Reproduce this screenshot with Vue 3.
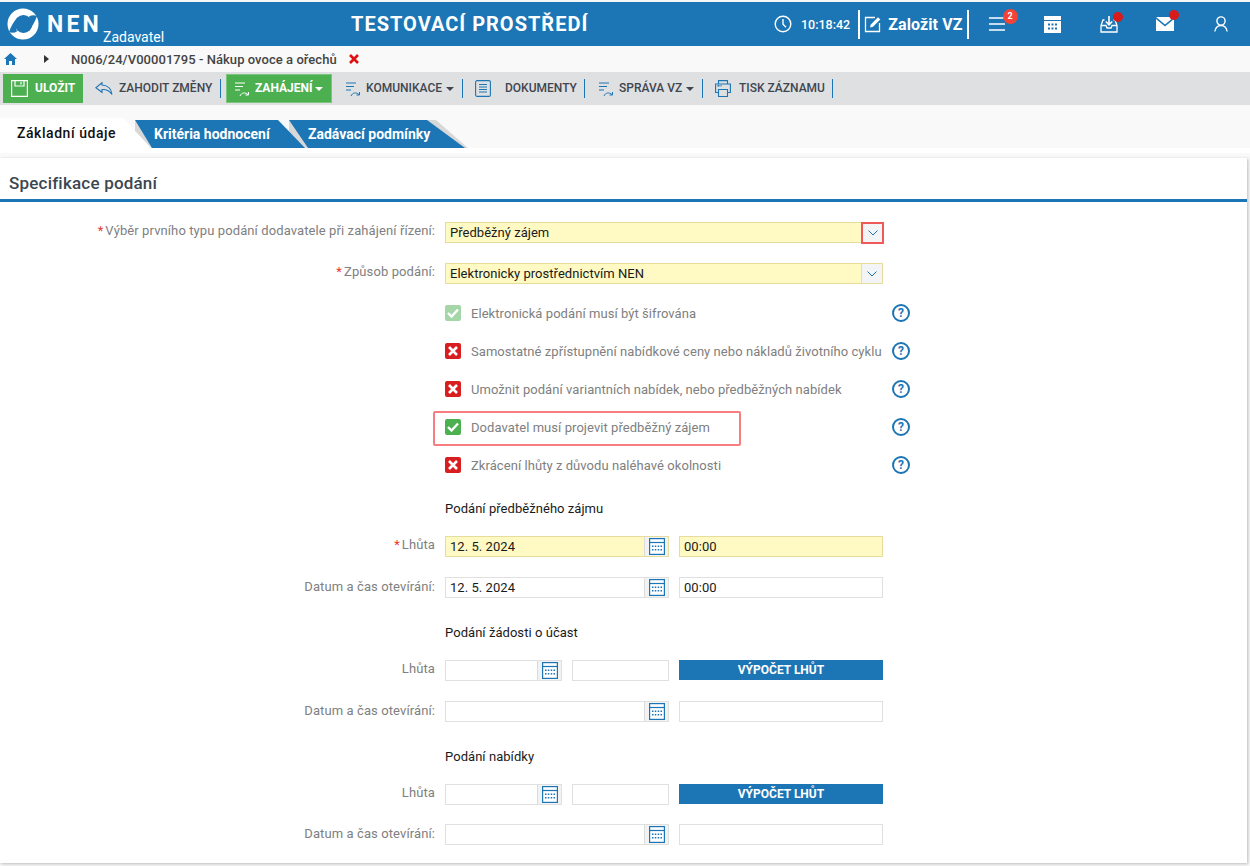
<script setup>
const checks = [
  { text: 'Elektronická podání musí být šifrována', state: 'muted' },
  { text: 'Samostatné zpřístupnění nabídkové ceny nebo nákladů životního cyklu', state: 'off' },
  { text: 'Umožnit podání variantních nabídek, nebo předběžných nabídek', state: 'off' },
  { text: 'Dodavatel musí projevit předběžný zájem', state: 'on', marked: true },
  { text: 'Zkrácení lhůty z důvodu naléhavé okolnosti', state: 'off' }
]
const sections = [
  { title: 'Podání předběžného zájmu', cls: 'sec1', rows: [
    { label: 'Lhůta', req: true, date: '12. 5. 2024', time: '00:00', yellow: true },
    { label: 'Datum a čas otevírání:', date: '12. 5. 2024', time: '00:00' }
  ] },
  { title: 'Podání žádosti o účast', cls: 'sec2', rows: [
    { label: 'Lhůta', date: '', time: '', calc: true },
    { label: 'Datum a čas otevírání:', date: '', time: '' }
  ] },
  { title: 'Podání nabídky', cls: 'sec3', rows: [
    { label: 'Lhůta', date: '', time: '', calc: true },
    { label: 'Datum a čas otevírání:', date: '', time: '' }
  ] }
]
</script>

<template>
  <div class="page">
    <header class="top">
      <div class="brand">
        <svg class="logo" width="32" height="32" viewBox="0 0 32 32">
          <circle cx="16" cy="16" r="15.500" fill="#fff"/>
          <circle cx="16.500" cy="16" r="9" fill="#1c75b4"/>
          <path d="M2 24 C4 18 7 13 11 9 C8.500 14 8 19 10 23.500 C7.500 25 4.500 25 2 24z" fill="#1c75b4"/>
          <path d="M30 8 C28 14 25 19 21 23 C23.500 18 24 13 22 8.500 C24.500 7 27.500 7 30 8z" fill="#1c75b4"/>
        </svg>
        <span class="nen">NEN</span>
        <span class="role">Zadavatel</span>
      </div>
      <div class="title">TESTOVACÍ PROSTŘEDÍ</div>
      <div class="tools">
        <svg class="clock" width="18" height="18" viewBox="0 0 18 18" fill="none" stroke="#fff" stroke-width="1.400">
          <circle cx="9" cy="9" r="7.800"/><path d="M9 4v5.200l3 3"/>
        </svg>
        <span class="time">10:18:42</span>
        <i class="vbar first"></i>
        <svg class="edit" width="18" height="18" viewBox="0 0 18 18" fill="none" stroke="#fff" stroke-width="1.300">
          <path d="M11 2.500H1.500v14h14V8"/>
          <path d="M6 12.500l.8-3L14 2.300l2.300 2.200L9 11.700z" fill="#fff" stroke="none"/>
        </svg>
        <span class="create">Založit VZ</span>
        <i class="vbar"></i>
        <div class="menu-ico">
          <svg width="17" height="16" viewBox="0 0 17 16" stroke="#fff" stroke-width="1.500"><path d="M0 2h16M0 8h16M0 14h16"/></svg>
          <b class="badge">2</b>
        </div>
        <svg class="cal-top" width="17" height="17" viewBox="0 0 17 17">
          <path d="M0 0h17v17H0z" fill="#fff"/>
          <path d="M0 4.500h17" stroke="#1c75b4"/>
          <path d="M4 7.500h2v2H4zM7.500 7.500h2v2h-2zM11 7.500h2v2h-2zM4 11.500h2v2H4zM7.500 11.500h2v2h-2zM11 11.500h2v2h-2z" fill="#1c75b4"/>
        </svg>
        <div class="inbox">
          <svg width="18" height="18" viewBox="0 0 18 18" fill="none" stroke="#fff" stroke-width="1.300">
            <path d="M4.500 5H3L1 10.500V17h16v-6.500L15 5h-1.500"/>
            <path d="M1 10.500h5l1 2.500h4l1-2.500h5"/>
            <path d="M9 1v8M5.800 6.500L9 9.800l3.200-3.300" stroke-width="1.600"/>
          </svg>
          <i class="dot"></i>
        </div>
        <div class="mail">
          <svg width="18" height="14" viewBox="0 0 18 14">
            <path d="M0 0h18L9 7.500z" fill="#fff"/>
            <path d="M0 2l9 7.500L18 2v12H0z" fill="#fff"/>
          </svg>
          <i class="dot"></i>
        </div>
        <svg class="user" width="14" height="16" viewBox="0 0 14 16" fill="none" stroke="#fff" stroke-width="1.400">
          <circle cx="7" cy="5" r="4.100"/><path d="M.8 15.500C1.500 11.500 4 9.500 7 9.500s5.500 2 6.200 6"/>
        </svg>
      </div>
    </header>

    <nav class="crumbs">
      <svg class="home" width="13" height="12" viewBox="0 0 13 12"><path d="M6.500 0L13 6h-2v6H8V8H5v4H2V6H0z" fill="#1c75b4"/></svg>
      <i class="crumb-arrow"></i>
      <span class="crumb-text">N006/24/V00001795 - Nákup ovoce a ořechů</span>
      <svg class="crumb-x" width="10" height="10" viewBox="0 0 10 10"><path d="M1 1l8 8M9 1L1 9" stroke="#e01010" stroke-width="2.600"/></svg>
    </nav>

    <div class="toolbar">
      <button class="green save">
        <svg width="17" height="17" viewBox="0 0 17 17" fill="none" stroke="#fff" stroke-width="1.200"><path d="M.6.600h15.800v15.800H.6zM4 .6v5.400h9V.6M10 2v2.500"/></svg>
        <span>ULOŽIT</span>
      </button>
      <div class="tool discard">
        <svg width="18" height="13" viewBox="0 0 18 13" fill="none" stroke="#1c75b4" stroke-width="1.100"><path d="M7 .7L.8 5.700 7 10.300V7.500c4-.3 7.500 1 10 5-.5-5-4-9-10-9.500z"/></svg>
        <span>ZAHODIT ZMĚNY</span>
      </div>
      <i class="tbar b1"></i>
      <button class="green start">
        <svg class="flow" width="15" height="15" viewBox="0 0 15 15" fill="none" stroke="#fff" stroke-width="1"><path d="M0 1h10M0 4.500h8M0 8h5M5 14c1.500-3.500 5-4 8-1.500M13.500 10v3h-3"/></svg>
        <span>ZAHÁJENÍ</span><i class="caret white"></i>
      </button>
      <div class="tool comm">
        <svg class="flow" width="15" height="15" viewBox="0 0 15 15" fill="none" stroke="#1c75b4" stroke-width="1"><path d="M0 1h10M0 4.500h8M0 8h5M5 14c1.500-3.500 5-4 8-1.500M13.500 10v3h-3"/></svg>
        <span>KOMUNIKACE</span><i class="caret"></i>
      </div>
      <i class="tbar b2"></i>
      <div class="tool docs">
        <svg width="16" height="17" viewBox="0 0 16 17" fill="none" stroke="#1c75b4" stroke-width="1.100"><rect x=".6" y=".6" width="14.800" height="15.800" rx="1.500"/><path d="M4 4.500h8M4 7h8M4 9.500h8M4 12h8"/></svg>
        <span>DOKUMENTY</span>
      </div>
      <i class="tbar b3"></i>
      <div class="tool manage">
        <svg class="flow" width="15" height="15" viewBox="0 0 15 15" fill="none" stroke="#1c75b4" stroke-width="1"><path d="M0 1h10M0 4.500h8M0 8h5M5 14c1.500-3.500 5-4 8-1.500M13.500 10v3h-3"/></svg>
        <span>SPRÁVA VZ</span><i class="caret"></i>
      </div>
      <i class="tbar b4"></i>
      <div class="tool print">
        <svg width="16" height="17" viewBox="0 0 16 17" fill="none" stroke="#1c75b4" stroke-width="1.100"><path d="M3.500 4V.6h9V4M3.500 12.500H.6V4h14.800v8.500h-2.900M3.500 9.500h9v7h-9z"/><path d="M2.500 5.700h2M5.500 5.700h1" stroke-width="1.400"/></svg>
        <span>TISK ZÁZNAMU</span>
      </div>
      <i class="tbar b5"></i>
    </div>

    <div class="tabs">
      <div class="tab-active">Základní údaje</div>
      <div class="tab t2"><span>Kritéria hodnocení</span></div>
      <div class="tab t3"><span>Zadávací podmínky</span></div>
    </div>
    <div class="tab-strip"></div>

    <main class="panel">
      <h2 class="panel-title">Specifikace podání</h2>
      <div class="form">
        <div class="row">
          <label class="lab"><em>*</em>Výběr prvního typu podání dodavatele při zahájení řízení:</label>
          <div class="select">
            <span>Předběžný zájem</span>
            <div class="arrow marked"><svg width="10" height="6" viewBox="0 0 10 6" fill="none" stroke="#1c75b4"><path d="M.5.500L5 5l4.500-4.500"/></svg></div>
          </div>
        </div>
        <div class="row last-select">
          <label class="lab"><em>*</em>Způsob podání:</label>
          <div class="select">
            <span>Elektronicky prostřednictvím NEN</span>
            <div class="arrow"><svg width="10" height="6" viewBox="0 0 10 6" fill="none" stroke="#1c75b4"><path d="M.5.500L5 5l4.500-4.500"/></svg></div>
          </div>
        </div>

        <div v-for="c in checks" :key="c.text" class="check-row">
          <div class="check-wrap" :class="{ flagged: c.marked }">
            <span class="box" :class="c.state">
              <svg v-if="c.state !== 'off'" width="12" height="10" viewBox="0 0 12 10" fill="none" stroke="#fff" stroke-width="2.400"><path d="M1 5l3.500 3.500L11 1.500"/></svg>
              <svg v-else width="10" height="10" viewBox="0 0 10 10" fill="none" stroke="#fff" stroke-width="2.600"><path d="M1 1l8 8M9 1L1 9"/></svg>
            </span>
            <span class="check-text">{{ c.text }}</span>
          </div>
          <span class="help">?</span>
        </div>

        <section v-for="s in sections" :key="s.title" class="section" :class="s.cls">
          <h3 class="sec-title">{{ s.title }}</h3>
          <div v-for="r in s.rows" :key="r.label" class="row">
            <label class="lab"><em v-if="r.req">*</em>{{ r.label }}</label>
            <div class="fields" :class="{ short: r.calc }">
              <div class="date" :class="{ yellow: r.yellow }">
                <span>{{ r.date }}</span>
                <div class="cal">
                  <svg width="16" height="17" viewBox="0 0 16 17" fill="none">
                    <rect x=".6" y=".6" width="14.800" height="15.800" fill="#fff" stroke="#1c75b4" stroke-width="1.200"/>
                    <path d="M.6 4.500h14.800" stroke="#1c75b4" stroke-width="1.200"/>
                    <path d="M3 7.500h1.500V9H3zM5.800 7.500h1.500V9H5.800zM8.700 7.500h1.500V9H8.700zM11.500 7.500H13V9h-1.500zM3 11h1.500v1.500H3zM5.800 11h1.500v1.500H5.800zM8.700 11h1.500v1.500H8.700zM11.500 11H13v1.500h-1.500z" fill="#1c75b4"/>
                  </svg>
                </div>
              </div>
              <div class="timebox" :class="{ yellow: r.yellow }">{{ r.time }}</div>
              <button v-if="r.calc" class="calc">VÝPOČET LHŮT</button>
            </div>
          </div>
        </section>
      </div>
    </main>
  </div>
</template>

<style>
html, body { margin: 0; background: #e6e6e6; }
</style>

<style scoped>
.page { width: 1250px; height: 866px; overflow: hidden; background: #f9f9f9; font-family: Roboto, "Liberation Sans", sans-serif; }

.top { margin-top: 2px; height: 44px; background: #1c75b4; color: #fff; display: flex; align-items: center; box-shadow: 0 -2px 0 #f4f6f7; }
.brand { width: 351px; height: 44px; display: flex; align-items: flex-start; flex: none; box-sizing: border-box; padding-left: 7px; }
.logo { margin-top: 6px; flex: none; }
.nen { font-weight: 700; font-size: 23px; letter-spacing: 3.200px; line-height: 27px; margin: 9px 0 0 8px; }
.role { font-size: 14px; line-height: 16px; margin: 27px 0 0 1px; }
.title { font-size: 20px; font-weight: 700; letter-spacing: 1px; width: 423px; flex: none; white-space: nowrap; }
.tools { display: flex; align-items: center; height: 44px; flex: 1; position: relative; }
.clock { flex: none; }
.time { font-size: 12.500px; font-weight: 500; margin-left: 9px; }
.vbar { width: 2px; height: 29px; background: #fff; flex: none; margin: 0 0 0 4px; }
.vbar.first { margin-left: 8px; }
.edit { margin-left: 4px; flex: none; }
.create { font-size: 16px; font-weight: 700; margin-left: 6px; letter-spacing: .1px; white-space: nowrap; }
.menu-ico { position: relative; margin-left: 20px; height: 16px; flex: none; }
.menu-ico svg { display: block; }
.badge { position: absolute; left: 14px; top: -7px; width: 15px; height: 15px; border-radius: 50%; background: #f44336; font-size: 9px; line-height: 15px; text-align: center; }
.cal-top { margin-left: 38px; flex: none; }
.inbox, .mail { position: relative; flex: none; }
.inbox { margin-left: 39px; height: 18px; }
.mail { margin-left: 38px; height: 14px; }
.inbox svg, .mail svg { display: block; }
.dot { position: absolute; width: 10px; height: 10px; border-radius: 50%; background: #d81b1b; }
.inbox .dot { left: 13px; top: -3px; }
.mail .dot { left: 13px; top: -7px; }
.user { margin-left: 40px; flex: none; }

.crumbs { height: 26px; display: flex; align-items: center; background: #f9f9f9; }
.home { margin-left: 4px; flex: none; }
.crumb-arrow { width: 0; height: 0; border-left: 5px solid #333; border-top: 4px solid transparent; border-bottom: 4px solid transparent; margin-left: 27px; }
.crumb-text { margin-left: 22px; font-size: 13px; font-weight: 500; color: #444; letter-spacing: .05px; white-space: nowrap; }
.crumb-x { margin-left: 12px; flex: none; }

.toolbar { height: 33px; background: #dfe0e2; display: flex; align-items: center; font-size: 12px; font-weight: 500; color: #3f4650; white-space: nowrap; }
.toolbar span { position: relative; top: -1px; }
.green { border: 0; padding: 0; height: 29px; background: #4caf50; color: #fff; font: 700 12px Roboto, sans-serif; display: flex; align-items: center; flex: none; }
.save { margin-left: 3px; width: 80px; padding-left: 8px; gap: 7px; }
.save svg, .start svg, .tool svg { flex: none; }
.flow { position: relative; top: 1px; }
.tool { display: flex; align-items: center; flex: none; }
.discard { margin-left: 12px; width: 125px; gap: 7px; }
.discard span { left: -1px; }
.tbar { width: 1px; height: 19px; background: #1c75b4; flex: none; }
.start { margin-left: 5px; width: 106px; padding-left: 8px; gap: 5px; border: 1px solid #7cc57f; box-sizing: border-box; }
.caret { width: 0; height: 0; border-top: 4px solid #3f4650; border-left: 4px solid transparent; border-right: 4px solid transparent; flex: none; }
.caret.white { border-top-color: #fff; }
.start .caret { margin-left: -3px; }
.comm { margin-left: 14px; width: 116px; gap: 5px; }
.comm .caret, .manage .caret { margin-left: -1px; }
.docs { margin-left: 12px; width: 109px; gap: 14px; }
.manage { margin-left: 14px; width: 103px; gap: 5px; }
.print { margin-left: 12px; width: 117px; gap: 8px; }

.tabs { margin-top: 13px; height: 30px; display: flex; align-items: flex-end; position: relative; }
.tab-active { width: 151px; height: 30px; box-sizing: border-box; background: #fff; clip-path: polygon(0 0, 123px 0, 100% 100%, 0 100%); font-size: 14px; font-weight: 500; letter-spacing: .55px; color: #111; padding: 7px 0 0 17px; position: relative; z-index: 4; flex: none; }
.tab { height: 28px; position: relative; flex: none; color: #fff; font-size: 14px; font-weight: 700; }
.tab::before { content: ""; position: absolute; inset: 0 -3px 0 0; background: #d8d8d8; clip-path: polygon(0 0, calc(100% - 32px) 0, 100% 100%, 0 100%); }
.tab span { position: absolute; inset: 0; background: #1c75b4; line-height: 29px; }
.t2 { width: 170px; margin-left: -16px; z-index: 3; }
.t2 span { clip-path: polygon(0 0, 143px 0, 100% 100%, 17px 100%); padding-left: 19px; }
.t3 { width: 176px; margin-left: -16px; z-index: 2; }
.t3 span { clip-path: polygon(0 0, 138px 0, 100% 100%, 19px 100%); padding-left: 19px; }
.tab-strip { height: 5px; background: #fff; }

.panel { margin: 5px 3px 0 0; height: 705px; background: #fff; box-shadow: 1px 1px 3px rgba(0,0,0,.25); overflow: hidden; }
.panel-title { margin: 0; box-sizing: border-box; padding: 13px 0 0 9px; border-bottom: 3px solid #1c75b4; height: 44px; font-size: 17px; line-height: 24px; font-weight: 500; color: #3c4650; letter-spacing: .2px; }
.form { padding-top: 20px; }
.row { display: flex; height: 21px; margin-bottom: 20px; }
.last-select { margin-bottom: 10px; }
.lab { width: 435px; flex: none; text-align: right; font-size: 13px; line-height: 18px; color: #808080; white-space: nowrap; letter-spacing: .1px; }
.section .row:last-child .lab { padding-top: 1px; }
.lab em { color: #e53935; font-style: normal; margin-right: 2px; }
.select { width: 438px; height: 21px; box-sizing: border-box; margin-left: 10px; background: #fff9c4; border: 1px solid #e6dc9c; display: flex; align-items: center; justify-content: space-between; padding-left: 4px; font-size: 13px; color: #1a1a1a; letter-spacing: .03px; position: relative; }
.arrow { width: 20px; height: 19px; background: #f2f4f6; border-left: 1px solid #dcdcdc; display: flex; align-items: center; justify-content: center; }
.arrow.marked { position: absolute; right: -2px; top: -1px; width: 23px; height: 22px; box-sizing: border-box; border: 2px solid #f0595a; }

.check-row { height: 38px; display: flex; align-items: center; padding-left: 445px; position: relative; }
.check-wrap { width: 447px; display: flex; align-items: center; flex: none; position: relative; }
.check-wrap.flagged::after { content: ""; position: absolute; left: -12px; top: -8px; width: 304px; height: 31px; border: 2px solid #f77d80; border-radius: 2px; }
.box { width: 16px; height: 16px; border-radius: 2px; display: flex; align-items: center; justify-content: center; flex: none; }
.box.on { background: #4caf50; }
.box.muted { background: #a5d6a7; }
.box.off { background: #d81e1e; }
.check-text { margin-left: 10px; font-size: 13px; color: #808080; letter-spacing: .06px; white-space: nowrap; }
.help { width: 18px; height: 18px; box-sizing: border-box; border: 2px solid #1c75b4; border-radius: 50%; color: #1c75b4; font-size: 12px; font-weight: 700; line-height: 14px; text-align: center; flex: none; }

.section { padding-top: 14px; }
.sec2, .sec3 { padding-top: 4px; }
.sec-title { margin: 0 0 18px 445px; height: 20px; font-size: 13px; font-weight: 400; line-height: 22px; color: #1a1a1a; letter-spacing: .05px; }
.sec3 .row:first-of-type { margin-bottom: 19px; }
.fields { margin-left: 10px; display: flex; gap: 10px; }
.date { width: 224px; height: 21px; box-sizing: border-box; border: 1px solid #e0e0e0; display: flex; align-items: center; justify-content: space-between; padding-left: 4px; font-size: 13px; color: #1a1a1a; letter-spacing: .05px; background: #fff; }
.timebox { width: 204px; height: 21px; box-sizing: border-box; border: 1px solid #e0e0e0; padding-left: 4px; font-size: 13px; line-height: 19px; color: #1a1a1a; letter-spacing: .05px; background: #fff; }
.short .date { width: 117px; }
.short .timebox { width: 97px; }
.date.yellow, .timebox.yellow { background: #fff9c4; border-color: #e6dc9c; }
.cal { width: 23px; height: 19px; background: #f1f2f4; border-left: 1px solid #dcdcdc; display: flex; align-items: center; justify-content: center; flex: none; }
.calc { width: 204px; height: 20px; border: 0; padding: 0; background: #1c75b4; color: #fff; font: 700 12px Roboto, sans-serif; }
</style>
